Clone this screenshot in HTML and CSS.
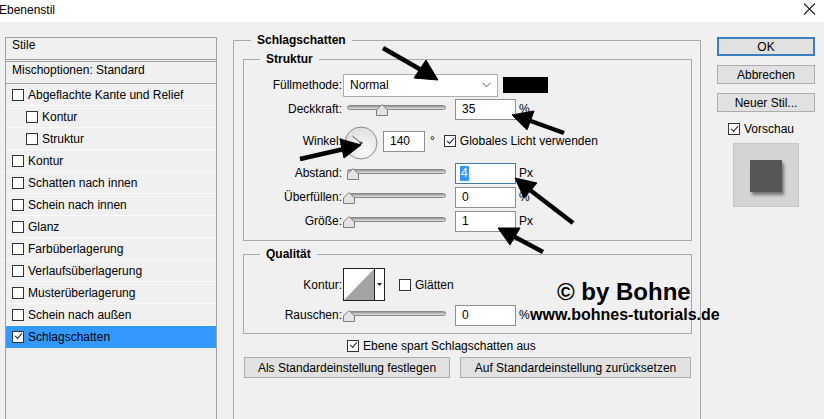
FILE: index.html
```html
<!DOCTYPE html>
<html lang="de">
<head>
<meta charset="utf-8">
<title>Ebenenstil</title>
<link rel="stylesheet" href="styles.css">
</head>
<body>
<div class="dialog">
  <header class="titlebar">
    <span class="title">Ebenenstil</span>
    <svg class="close" width="13" height="12" viewBox="0 0 13 12"><path d="M1 0.5 L12 11.5 M12 0.5 L1 11.5" stroke="#222" stroke-width="1.1" fill="none"/></svg>
  </header>

  <div class="content">
    <aside class="styles-list">
      <div class="list-head">Stile</div>
      <div class="list-blend">Mischoptionen: Standard</div>
      <div class="list-row"><span class="cb"></span>Abgeflachte Kante und Relief</div>
      <div class="list-row sub"><span class="cb"></span>Kontur</div>
      <div class="list-row sub"><span class="cb"></span>Struktur</div>
      <div class="list-row"><span class="cb"></span>Kontur</div>
      <div class="list-row"><span class="cb"></span>Schatten nach innen</div>
      <div class="list-row"><span class="cb"></span>Schein nach innen</div>
      <div class="list-row"><span class="cb"></span>Glanz</div>
      <div class="list-row"><span class="cb"></span>Farbüberlagerung</div>
      <div class="list-row"><span class="cb"></span>Verlaufsüberlagerung</div>
      <div class="list-row"><span class="cb"></span>Musterüberlagerung</div>
      <div class="list-row"><span class="cb"></span>Schein nach außen</div>
      <div class="list-row active"><span class="cb checked"></span>Schlagschatten</div>
    </aside>

    <main class="settings">
      <fieldset class="group outer">
        <legend>Schlagschatten</legend>

        <fieldset class="group inner">
          <legend>Struktur</legend>
          <div class="row">
            <span class="lbl">Füllmethode:</span>
            <div class="select"><span>Normal</span>
              <svg width="9" height="6" viewBox="0 0 9 6"><path d="M0.5 0.8 L4.5 4.8 L8.5 0.8" stroke="#555" fill="none"/></svg>
            </div>
            <span class="swatch"></span>
          </div>
          <div class="row">
            <span class="lbl">Deckkraft:</span>
            <div class="slider"><span class="track"></span><svg class="thumb" style="left:33px" width="12" height="12" viewBox="0 0 12 12"><path d="M6 0.5 L11.5 6 L11.5 11.5 L0.5 11.5 L0.5 6 Z" fill="#e4e4e4" stroke="#7d7d7d"/></svg></div>
            <span class="num">35</span><span class="unit">%</span>
          </div>
          <div class="row tall">
            <span class="lbl">Winkel:</span>
            <svg class="dial" width="34" height="34" viewBox="0 0 34 34">
              <defs><radialGradient id="dialFill" cx="0.6" cy="0.7" r="0.8"><stop offset="0" stop-color="#fbfbfb"/><stop offset="1" stop-color="#d9d9d9"/></radialGradient></defs>
              <circle cx="17" cy="17" r="16" fill="url(#dialFill)" stroke="#8a8a8a"/>
              <path d="M17 17 L8.6 10" stroke="#555" stroke-width="1"/>
              <circle cx="17" cy="17" r="1.6" fill="#444"/>
            </svg>
            <span class="num angle">140</span><span class="deg">°</span>
            <span class="cb checked box-gap"></span><span class="cb-text">Globales Licht verwenden</span>
          </div>
          <div class="row">
            <span class="lbl">Abstand:</span>
            <div class="slider"><span class="track"></span><svg class="thumb" style="left:4px" width="12" height="12" viewBox="0 0 12 12"><path d="M6 0.5 L11.5 6 L11.5 11.5 L0.5 11.5 L0.5 6 Z" fill="#e4e4e4" stroke="#7d7d7d"/></svg></div>
            <span class="num focused"><span class="sel">4</span></span><span class="unit">Px</span>
          </div>
          <div class="row">
            <span class="lbl">Überfüllen:</span>
            <div class="slider"><span class="track"></span><svg class="thumb" style="left:0px" width="12" height="12" viewBox="0 0 12 12"><path d="M6 0.5 L11.5 6 L11.5 11.5 L0.5 11.5 L0.5 6 Z" fill="#e4e4e4" stroke="#7d7d7d"/></svg></div>
            <span class="num">0</span><span class="unit">%</span>
          </div>
          <div class="row">
            <span class="lbl">Größe:</span>
            <div class="slider"><span class="track"></span><svg class="thumb" style="left:0px" width="12" height="12" viewBox="0 0 12 12"><path d="M6 0.5 L11.5 6 L11.5 11.5 L0.5 11.5 L0.5 6 Z" fill="#e4e4e4" stroke="#7d7d7d"/></svg></div>
            <span class="num">1</span><span class="unit">Px</span>
          </div>
        </fieldset>

        <fieldset class="group inner quality">
          <legend>Qualität</legend>
          <div class="row contour-row">
            <span class="lbl">Kontur:</span>
            <svg class="contour" width="42" height="33" viewBox="0 0 42 33">
              <rect x="0.5" y="0.5" width="41" height="32" fill="#fff" stroke="#222"/>
              <path d="M1 32 L31 1 L31 32 Z" fill="#a3a3a3"/>
              <path d="M31.5 0.5 L31.5 32.5" stroke="#222"/>
              <path d="M34 15 L39 15 L36.5 18 Z" fill="#222"/>
            </svg>
            <span class="cb smooth"></span><span class="cb-text">Glätten</span>
          </div>
          <div class="row">
            <span class="lbl">Rauschen:</span>
            <div class="slider"><span class="track"></span><svg class="thumb" style="left:0px" width="12" height="12" viewBox="0 0 12 12"><path d="M6 0.5 L11.5 6 L11.5 11.5 L0.5 11.5 L0.5 6 Z" fill="#e4e4e4" stroke="#7d7d7d"/></svg></div>
            <span class="num">0</span><span class="unit">%</span>
          </div>
        </fieldset>

        <div class="knockout"><span class="cb checked"></span><span class="cb-text">Ebene spart Schlagschatten aus</span></div>

        <div class="defaults">
          <button class="btn wide1">Als Standardeinstellung festlegen</button>
          <button class="btn wide2">Auf Standardeinstellung zurücksetzen</button>
        </div>
      </fieldset>
    </main>

    <aside class="actions">
      <button class="btn action primary">OK</button>
      <button class="btn action">Abbrechen</button>
      <button class="btn action">Neuer Stil...</button>
      <div class="preview-toggle"><span class="cb checked"></span><span class="cb-text">Vorschau</span></div>
      <div class="preview"><span class="preview-square"></span></div>
    </aside>
  </div>

  <div class="watermark">
    <div class="wm-big">© by Bohne</div>
    <div class="wm-small">www.bohnes-tutorials.de</div>
  </div>

  <svg class="arrows" width="824" height="419" viewBox="0 0 824 419">
    <g fill="#000" stroke="#000">
      <path d="M383 48 L423 71" stroke-width="4.5"/>
      <path d="M438 80 L414 78 L426 60 Z"/>
      <path d="M564 133 L528 120" stroke-width="4.5"/>
      <path d="M512 115 L534 111 L527 130 Z"/>
      <path d="M300 159 L344 149" stroke-width="4.5"/>
      <path d="M361 145 L340 139 L344 158 Z"/>
      <path d="M573 223 L530 190" stroke-width="4.5"/>
      <path d="M515 178 L537 183 L524 198 Z"/>
      <path d="M543 252 L513 236" stroke-width="4.5"/>
      <path d="M498 228 L520 228 L510 245 Z"/>
    </g>
  </svg>
</div>
</body>
</html>
```

FILE: styles.css
```css
* { box-sizing: border-box; }

html, body {
  margin: 0;
  padding: 0;
}

body {
  width: 824px;
  height: 419px;
  overflow: hidden;
  background: #f0f0f0;
  font-family: "Liberation Sans", Arial, sans-serif;
  font-size: 12px;
  color: #000;
}

.dialog {
  position: relative;
  width: 824px;
  height: 419px;
  overflow: hidden;
}

/* window title */
.titlebar {
  height: 22px;
  background: #fff;
  display: flex;
  align-items: center;
  justify-content: space-between;
  padding-right: 8px;
}

.title {
  margin-left: -1px;
  line-height: 16px;
  margin-top: -3px;
}

.close { margin-top: -5px; }

.content {
  display: flex;
  align-items: flex-start;
  height: 397px;
}

/* effect list on the left */
.styles-list {
  margin: 15px 0 0 5px;
  width: 212px;
  height: 382px;
  border: 1px solid #a0a0a0;
  border-bottom: none;
}

.list-head {
  height: 22px;
  padding: 0 6px;
  line-height: 15px;
  border-bottom: 1px solid #a0a0a0;
  margin-bottom: 1px;
}

.list-blend {
  height: 23px;
  padding: 0 6px;
  line-height: 17px;
  border-top: 1px solid #a0a0a0;
  border-bottom: 1px solid #a0a0a0;
}

.list-row {
  height: 22px;
  display: flex;
  align-items: center;
  padding-left: 6px;
  border-bottom: 1px solid #fbfbfb;
}

.list-row.sub { padding-left: 20px; }

.list-row.active {
  background: #3399ff;
  border-bottom-color: #3399ff;
}

.list-row .cb { margin-right: 4px; }

/* checkboxes */
.cb {
  flex: none;
  position: relative;
  width: 12px;
  height: 12px;
  border: 1px solid #333;
  background: #fff;
}

.cb.checked::after {
  content: "";
  position: absolute;
  left: 2px;
  top: 1.5px;
  width: 6px;
  height: 3px;
  border-left: 1.3px solid #222;
  border-bottom: 1.3px solid #222;
  transform: rotate(-48deg);
}

.cb-text { margin-left: 4px; }

/* middle settings groups */
.settings {
  margin-left: 16px;
}

.group {
  margin: 0;
  min-width: 0;
  border: 1px solid #a9a9a9;
}

.group > legend {
  font-weight: bold;
  line-height: 14px;
  padding: 0 6px;
}

.outer {
  margin-top: 11px;
  width: 468px;
  height: 386px;
  padding: 0 8px 0 9px;
  border-bottom: none;
}

.outer > legend { margin-left: 8px; }

.inner {
  margin-top: 5px;
  width: 449px;
  padding: 7px 0 7px 0;
}

.inner > legend { margin-left: 16px; }

.quality {
  margin-top: 6px;
  padding: 5px 0 6px 0;
}

.row {
  display: flex;
  align-items: center;
  height: 24px;
}

.row.tall { height: 40px; }
.row.contour-row { height: 37px; }

.lbl {
  flex: none;
  width: 98px;
  margin-right: 1px;
  text-align: right;
}

.select {
  flex: none;
  width: 155px;
  height: 23px;
  background: #fff;
  border: 1px solid #adadad;
  display: flex;
  align-items: center;
  justify-content: space-between;
  padding: 0 6px 0 6px;
}

.swatch {
  flex: none;
  width: 45px;
  height: 16px;
  margin-left: 5px;
  background: #000;
}

.slider {
  position: relative;
  flex: none;
  width: 106px;
  height: 12px;
  margin-top: 2px;
}

.track {
  position: absolute;
  left: 4px;
  right: 3px;
  top: 1px;
  height: 5px;
  border-radius: 3px;
  background: linear-gradient(#8f8f8f, #c9c9c9 60%, #dcdcdc);
  border: 1px solid #8a8a8a;
}

.thumb {
  position: absolute;
  top: 0;
}

.num {
  flex: none;
  width: 61px;
  height: 21px;
  margin-left: 6px;
  background: #fff;
  border: 1px solid #8f8f8f;
  padding-left: 6px;
  line-height: 19px;
}

.num.focused { border-color: #3c7fb1; }

.sel {
  display: inline-block;
  background: #3399ff;
  color: #fff;
  line-height: 15px;
  padding: 0 1px;
  margin-left: -2px;
}

.unit { margin-left: 3px; }

.dial {
  flex: none;
  margin-left: 1px;
  margin-top: 3px;
}

.num.angle {
  width: 42px;
  margin-left: 5px;
}

.deg { margin-left: 5px; }

.box-gap { margin-left: 9px; }

.contour { flex: none; }

.cb.smooth { margin-left: 14px; }

.knockout {
  display: flex;
  align-items: center;
  height: 23px;
  padding-left: 104px;
}

.defaults {
  display: flex;
  gap: 10px;
  padding-left: 1px;
}

.btn {
  height: 21px;
  padding: 0;
  background: #e1e1e1;
  border: 1px solid #adadad;
  font-family: inherit;
  font-size: 12px;
  color: #000;
}

.wide1 { width: 206px; }
.wide2 { width: 231px; }

/* right-hand buttons */
.actions {
  margin-left: 16px;
  width: 98px;
  display: flex;
  flex-direction: column;
}

.action {
  height: 19px;
  margin-top: 9px;
}

.action.primary {
  margin-top: 15px;
  border: 2px solid #3c7fc0;
}

.preview-toggle {
  display: flex;
  align-items: center;
  margin-top: 10px;
  height: 14px;
  padding-left: 11px;
}

.preview {
  margin: 7px 0 0 16px;
  width: 66px;
  height: 64px;
  background: #d4d4d4;
  border: 1px solid #c6c6c6;
  padding: 16px 0 0 16px;
}

.preview-square {
  display: block;
  width: 32px;
  height: 32px;
  background: #575757;
  box-shadow: 2px 3px 3px rgba(0, 0, 0, 0.45);
}

/* author stamp across the dialog */
.watermark {
  position: absolute;
  left: 530px;
  top: 280px;
  font-family: "Liberation Sans", Arial, sans-serif;
  font-weight: bold;
  color: #000;
}

.wm-big {
  font-size: 24px;
  line-height: 24px;
  margin-left: 27px;
}

.wm-small {
  font-size: 16px;
  line-height: 16px;
  margin-top: 3px;
}

.arrows {
  position: absolute;
  left: 0;
  top: 0;
  pointer-events: none;
}
```
